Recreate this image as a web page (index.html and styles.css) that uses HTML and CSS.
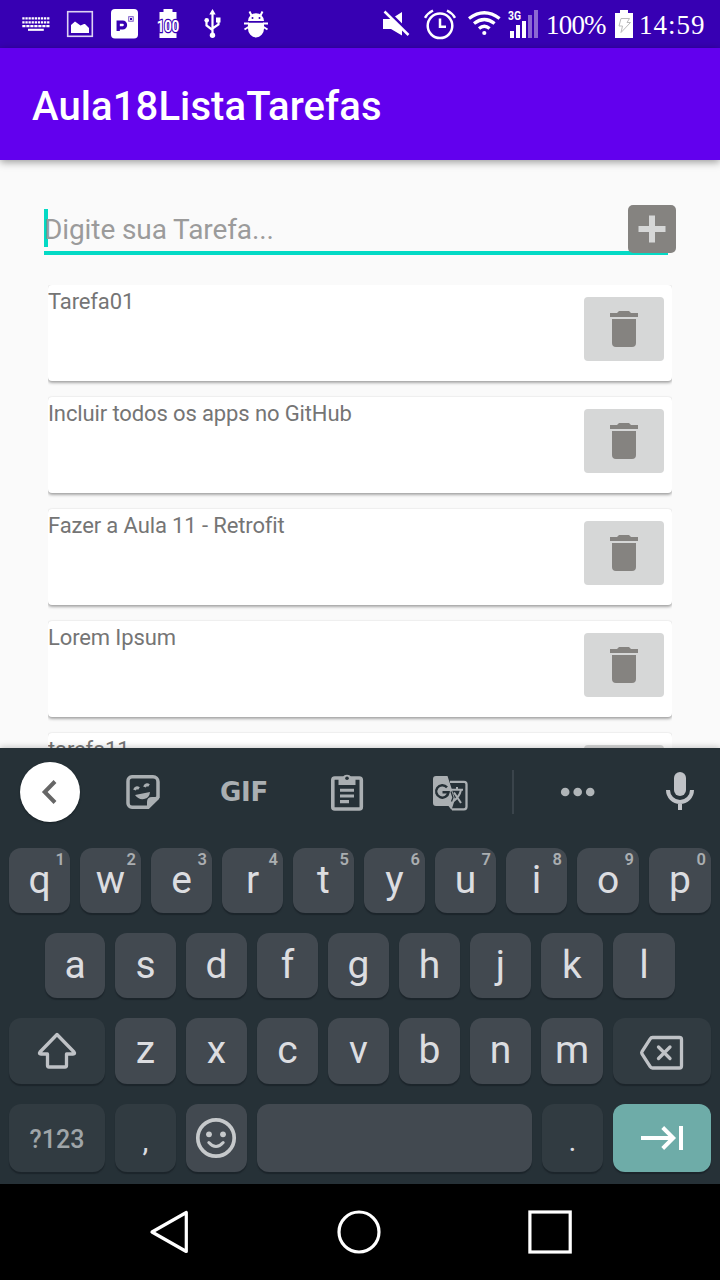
FILE: index.html
```html
<!DOCTYPE html>
<html lang="pt-BR">
<head>
<meta charset="utf-8">
<title>Aula18ListaTarefas</title>
<link rel="stylesheet" href="styles.css">
</head>
<body>
<svg class="defs" width="0" height="0" aria-hidden="true">
  <symbol id="trash" viewBox="610 311 28 36">
    <path fill="#858380" d="M610 313h7l2-2h10l2 2h7v4h-28zM612 319h24v24a4 4 0 0 1-4 4h-16a4 4 0 0 1-4-4z"/>
  </symbol>
</svg>
<div class="phone">
  <header class="status">
    <div class="status-left">
      <svg width="44" height="48" viewBox="14 0 44 48"><g stroke="#fff" stroke-width="2.2" stroke-dasharray="2.3 .8"><path d="M22.3 18.4h27.3M22.3 22.4h27.3" /><path d="M22.3 26.1h27.3" stroke-dasharray="3.2 .8"/></g><path d="M28 29.8h15.8" stroke="#fff" stroke-width="2.1"/></svg>
      <svg width="44" height="48" viewBox="58 0 44 48"><rect x="67.7" y="11.7" width="24.6" height="24.6" fill="none" stroke="#ddd2f3" stroke-width="1.6"/><path fill="#fff" d="M71 33v-8l4-3.500 5.500 4 3.500-1.500h1l4 4v5z"/></svg>
      <svg width="44" height="48" viewBox="102 0 44 48"><rect x="111" y="9" width="27" height="29.500" rx="4" fill="#fff"/><path d="M118.200 31V22.200h4.500a2.700 2.700 0 0 1 0 5.600h-4.500" fill="none" stroke="#3700b3" stroke-width="3.300"/><rect x="128.700" y="16.700" width="4.500" height="4.500" fill="none" stroke="#7957c9"/><path fill="#3700b3" d="M130 18h2v2h-2z"/></svg>
      <svg width="44" height="48" viewBox="146 0 44 48"><path fill="#fff" d="M159.500 12h4V9h9v3h4v26h-17z"/><text x="168" y="32" text-anchor="middle" textLength="22.500" lengthAdjust="spacingAndGlyphs" class="battery-badge">100</text></svg>
      <svg width="44" height="48" viewBox="190 0 44 48"><g fill="none" stroke="#fff" stroke-width="2.200"><path d="M212.500 13v22M206.500 21v4.500l6 4.500M218.500 21v3.500l-6 4"/></g><path fill="#fff" d="M212.500 9l3.200 5.500h-6.400zM216 17.500h4.500v5H216z"/><circle cx="206.700" cy="20.300" r="2.300" fill="#fff"/><circle cx="212.500" cy="35.200" r="2.700" fill="#fff"/></svg>
      <svg width="44" height="48" viewBox="234 0 44 48"><path fill="#fff" d="M248 21a8 7.800 0 0 1 16 0zM248 22.700h16v6a8 8.700 0 0 1-16 0z"/><path d="M249.500 11.500l2 4M262.500 11.500l-2 4M244 23.500h5M263 23.500h5M244.500 29.500l4-2.500M267.500 29.500l-4-2.500" stroke="#fff" stroke-width="2"/><circle cx="252.500" cy="18" r="1" fill="#3700b3"/><circle cx="259.500" cy="18" r="1" fill="#3700b3"/></svg>
    </div>
    <div class="status-right">
      <svg width="44" height="48" viewBox="374 0 44 48"><path fill="#fff" d="M383 19h8l11-7v23.500L391 29h-8z"/><path d="M386.500 10l24 24" stroke="#3700b3" stroke-width="3"/><path d="M384.500 11.500l24 23.500" stroke="#fff" stroke-width="2.500"/></svg>
      <svg width="44" height="48" viewBox="418 0 44 48"><g fill="none" stroke="#fff" stroke-width="2.500"><circle cx="440" cy="25.800" r="12.300"/><path d="M440 18.500v8.300h6M425 17.800q2.500-4.500 8-7.300M455 17.800q-2.500-4.500-8-7.300"/></g></svg>
      <svg width="44" height="48" viewBox="462 0 44 48"><g fill="none" stroke="#fff" stroke-width="3.300"><path d="M469 18.500q15.300-11.500 30.600 0M474 23.500q10.300-8 20.600 0M479 28.500q5.300-4.500 10.600 0"/></g><circle cx="484.300" cy="33" r="2.100" fill="#fff"/></svg>
      <svg width="38" height="48" viewBox="506 0 38 48"><text x="508" y="20" textLength="13" lengthAdjust="spacingAndGlyphs" class="network">3G</text><path fill="#fff" d="M510 31h4v7h-4zM516 25h4v13h-4zM522 21h4v17h-4z"/><path fill="#8b69d2" d="M528 15h4v23h-4zM534 10h4v28h-4z"/></svg>
      <span class="percent">100%</span>
      <svg width="29" height="48" viewBox="610 0 29 48"><path fill="#fff" d="M615 13h5v-3h8v3h5v25h-18z"/><path d="M621 18.500h8.500L627 22.500h3.500L621 32.500l1.500-6.500h-3.500z" fill="none" stroke="#bbb"/></svg>
      <span class="clock">14:59</span>
    </div>
  </header>
  <div class="appbar"><h1>Aula18ListaTarefas</h1></div>
  <main class="content">
    <div class="entry">
      <span class="placeholder">Digite sua Tarefa...</span>
      <button class="add" aria-label="Adicionar"><svg width="28" height="28" viewBox="0 0 28 28"><path d="M.5 14h27M14 .5v27" stroke="#d6d7d7" stroke-width="6"/></svg></button>
    </div>
    <ul class="tasks">
      <li><span>Tarefa01</span><button><svg width="28" height="36"><use href="#trash"/></svg></button></li>
      <li><span>Incluir todos os apps no GitHub</span><button><svg width="28" height="36"><use href="#trash"/></svg></button></li>
      <li><span>Fazer a Aula 11 - Retrofit</span><button><svg width="28" height="36"><use href="#trash"/></svg></button></li>
      <li><span>Lorem Ipsum</span><button><svg width="28" height="36"><use href="#trash"/></svg></button></li>
      <li><span>tarefa11</span><button><svg width="28" height="36"><use href="#trash"/></svg></button></li>
    </ul>
  </main>
  <section class="keyboard">
    <div class="tools">
      <div class="collapse"><svg width="60" height="60" viewBox="20 762 60 60"><path d="M55 781.500L44.700 792 55 802.500" fill="none" stroke="#666" stroke-width="4"/></svg></div>
      <svg width="126" height="60" viewBox="80 762 126 60"><path d="M132 776.800h21a5 5 0 0 1 5 5V797l-10 10.200h-16a4 4 0 0 1-4-4v-22a4 4 0 0 1 4-4.400z" fill="none" stroke="#aaafb2" stroke-width="3.500"/><path fill="#aaafb2" d="M159 797v2l-10 9.500h-2V802q0-5 5-5zM135 795l15-3q-.5 6-6 7t-9-4z"/><path d="M134.500 790q1.500-3.500 4.500-1.500M144.500 787q1.500-3.500 4.500-1.500" fill="none" stroke="#aaafb2" stroke-width="3"/></svg>
      <span class="gif">GIF</span>
      <svg width="130" height="60" viewBox="282 762 130 60"><rect x="332.800" y="778" width="28.500" height="31" rx="2" fill="none" stroke="#aaafb2" stroke-width="3.600"/><path fill="#aaafb2" d="M338.500 778h4a4.700 4.700 0 0 1 9 0h4v7h-17z"/><circle cx="347" cy="778.300" r="1.800" fill="#263137"/><path d="M340 790.200h14M340 796h14M340 801.600h9" stroke="#aaafb2" stroke-width="3.100"/></svg>
      <svg width="100" height="60" viewBox="412 762 100 60"><path d="M450 781.800h14q2.500 0 2.500 2.500v22.500q0 2.500-2.500 2.500h-12" fill="none" stroke="#aaafb2" stroke-width="2.300"/><path fill="#aaafb2" d="M436 776h11.500l7.500 23-3.500 11-3-4H436q-3 0-3-3v-24q0-3 3-3z"/><path d="M447 787.300a6.200 6.200 0 1 0 1.500 5h-6" fill="none" stroke="#263137" stroke-width="2.500"/><path d="M450.500 789.800H463M457 787v3M461 790q-1.500 7-8.500 12M454 792.500l7 10.500" fill="none" stroke="#aaafb2" stroke-width="2"/><path d="M451 791.500l2 6-1.500 4" fill="none" stroke="#263137" stroke-width="1.300"/></svg>
      <i class="divider"></i>
      <svg width="126" height="60" viewBox="514 762 126 60"><g fill="#b0b5b8"><circle cx="565.200" cy="792" r="4.300"/><circle cx="577.700" cy="792" r="4.300"/><circle cx="590.200" cy="792" r="4.300"/></g></svg>
      <svg width="80" height="60" viewBox="640 762 80 60"><rect x="674" y="772" width="12" height="24" rx="6" fill="#bfc2c6"/><path d="M668 790a12 12 0 0 0 24 0M680 802v8" fill="none" stroke="#bfc2c6" stroke-width="4"/></svg>
    </div>
    <div class="row">
      <b class="key">q<sup>1</sup></b><b class="key">w<sup>2</sup></b><b class="key">e<sup>3</sup></b><b class="key">r<sup>4</sup></b><b class="key">t<sup>5</sup></b><b class="key">y<sup>6</sup></b><b class="key">u<sup>7</sup></b><b class="key">i<sup>8</sup></b><b class="key wide">o<sup>9</sup></b><b class="key wide">p<sup>0</sup></b>
    </div>
    <div class="row home">
      <b class="key narrow">a</b><b class="key">s</b><b class="key">d</b><b class="key">f</b><b class="key">g</b><b class="key">h</b><b class="key">j</b><b class="key wide">k</b><b class="key wide">l</b>
    </div>
    <div class="row third">
      <b class="key dark shift"><svg width="96" height="66" viewBox="9 1018 96 66"><path d="M57 1034.500L74 1052q1.500 2-1 2h-6.500v11.500q0 1.500-1.500 1.500H49q-1.500 0-1.500-1.500V1054H41q-2.500 0-1-2z" fill="none" stroke="#bfc2c6" stroke-width="3.300" stroke-linejoin="round"/></svg></b><b class="key">z</b><b class="key">x</b><b class="key">c</b><b class="key">v</b><b class="key">b</b><b class="key">n</b><b class="key wide">m</b><b class="key dark side"><svg width="98" height="66" viewBox="613 1018 98 66"><path d="M652.500 1037.500h27q2 0 2 2v26.500q0 2-2 2h-27q-1.500 0-2.300-1.300l-8.200-12.700q-.7-1.200 0-2.300l8.200-12.900q.8-1.300 2.300-1.300z" fill="none" stroke="#bfc2c6" stroke-width="3.300"/><path d="M658.500 1047l11.500 11.500M670 1047l-11.500 11.500" stroke="#bfc2c6" stroke-width="3.300" stroke-linecap="round"/></svg></b>
    </div>
    <div class="row bottom">
      <b class="key dark shift symbols">?123</b><b class="key dark punct">,</b><b class="key"><svg width="61" height="68" viewBox="186 1104 61 68"><circle cx="216" cy="1138" r="18.200" fill="none" stroke="#c6c9cb" stroke-width="3.700"/><circle cx="209" cy="1134.300" r="2.900" fill="#c6c9cb"/><circle cx="223" cy="1134.300" r="2.900" fill="#c6c9cb"/><path d="M208.800 1142.500q7.200 8 14.400 0" fill="none" stroke="#c6c9cb" stroke-width="3" stroke-linecap="round"/></svg></b><b class="key space"></b><b class="key dark punct">.</b><b class="key side enter"><svg width="98" height="68" viewBox="613 1104 98 68"><path d="M641 1138h32M662.700 1127.500l10.500 10.500-10.500 10.500M681 1126v24" fill="none" stroke="#fff" stroke-width="4"/></svg></b>
    </div>
  </section>
  <nav class="nav">
    <svg width="720" height="96" viewBox="0 1184 720 96"><g fill="none" stroke="#fff" stroke-width="3.200"><path d="M186.300 1212.500v39L152 1232z" stroke-linejoin="round"/><circle cx="359" cy="1232" r="20"/><rect x="529.900" y="1212" width="40.300" height="40"/></g></svg>
  </nav>
</div>
</body>
</html>
```
FILE: styles.css
```css
* { box-sizing: border-box; }
body { margin: 0; font-family: Roboto, sans-serif; background: #fafafa; }
.defs { display: block; position: absolute; }
svg { display: block; flex: none; }
button { border: 0; padding: 0; margin: 0; }
.phone { width: 720px; height: 1280px; overflow: hidden; display: flex; flex-direction: column; }

.status { height: 48px; flex: none; background: #3700b3; color: #fff; display: flex; justify-content: space-between; padding: 0 12px 0 14px; }
.status-left, .status-right { display: flex; }
.status-right { width: 346px; margin-right: -12px; }
.percent, .clock { font: 27px/51px "Liberation Serif", serif; white-space: nowrap; }
.percent { width: 66px; padding-left: 2px; letter-spacing: -.8px; }
.clock { letter-spacing: 1px; }
.battery-badge { font: bold 17px Roboto, sans-serif; fill: #fff; stroke: #3700b3; stroke-width: 2.5px; paint-order: stroke; }
.network { font: bold 13px Roboto, sans-serif; fill: #fff; }

.appbar { height: 112px; flex: none; background: #6200ee; color: #fff; padding: 6px 32px 0; display: flex; align-items: center; box-shadow: 0 2px 8px rgba(0, 0, 0, .4); position: relative; }
.appbar h1 { margin: 0; font-size: 40px; font-weight: 500; line-height: 48px; letter-spacing: .1px; }

.content { height: 588px; flex: none; padding: 45px 44px 0; overflow: hidden; }
.entry { width: 624px; height: 50px; border-bottom: 4px solid #03dac5; display: flex; align-items: flex-start; justify-content: space-between; }
.placeholder { height: 38px; margin-top: 4px; border-left: 4px solid #03dac5; color: #9b9b9b; font-size: 28px; line-height: 42px; text-indent: -4px; letter-spacing: -.1px; }
.add { width: 48px; height: 48px; flex: none; margin-right: -8px; border-radius: 5px; background: #858380; display: flex; align-items: center; justify-content: center; position: relative; }
.tasks { list-style: none; margin: 30px 4px 0; padding: 0; height: 463px; overflow: hidden; }
.tasks li { height: 96px; margin-bottom: 16px; background: #fff; border-radius: 4px; display: flex; justify-content: space-between; box-shadow: 0 2px 3px rgba(0, 0, 0, .32), 0 0 2px rgba(0, 0, 0, .12); }
.tasks span { color: #757575; font-size: 22px; line-height: 34px; letter-spacing: -.12px; }
.tasks button { width: 80px; height: 64px; margin: 12px 8px 0 0; border-radius: 4px; background: #d6d7d7; display: flex; align-items: center; justify-content: center; }

.keyboard { height: 436px; flex: none; background: #263137; position: relative; box-shadow: 0 -1px 6px rgba(0, 0, 0, .22); }
.tools { height: 100px; padding: 14px 0 0 20px; display: flex; }
.collapse { width: 60px; height: 60px; flex: none; border-radius: 50%; background: #fff; box-shadow: 0 1px 2px #172025; }
.gif { width: 76px; height: 60px; text-align: center; font: bold 26px/61px "DejaVu Sans", sans-serif; letter-spacing: -.3px; color: #aaafb2; }
.divider { width: 2px; height: 44px; margin-top: 8px; background: #3a444b; }
.row { height: 65px; padding: 0 9px; margin-bottom: 20px; display: flex; gap: 10px; }
.home { padding: 0 45px; }
.third { height: 66px; }
.bottom { height: 68px; }
.key { flex: 0 0 61px; position: relative; display: flex; align-items: center; justify-content: center; padding-bottom: 2px; border-radius: 12px; background: #424950; color: #dcdde0; font-size: 39px; font-weight: 400; box-shadow: 0 2px 1px #1c252b; }
.key:has(svg) { padding: 0; }
.key sup { position: absolute; top: 3px; right: 5px; font-size: 16.5px; font-weight: 600; line-height: 18px; color: #aaaeb1; }
.dark { background: #313b41; }
.narrow { flex-basis: 60px; }
.wide { flex-basis: 62px; }
.shift { flex-basis: 96px; }
.side { flex-basis: 98px; }
.space { flex-basis: 275px; }
.symbols { font-size: 25px; font-weight: 500; color: #9fa5a8; padding: 3px 0 0; }
.punct { font-size: 30px; padding: 5px 0 0; }
.enter { background: #6eaca8; }
.nav { height: 96px; flex: none; background: #000; }
```
